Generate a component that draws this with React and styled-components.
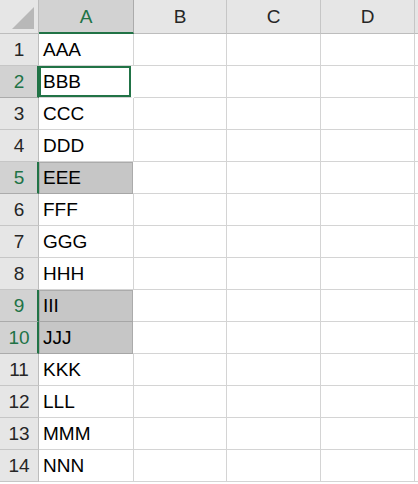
import React from "react"
import styled, { createGlobalStyle, css } from "styled-components"

const GREEN = "#217346"

const GlobalStyle = createGlobalStyle`
  html, body {
    margin: 0;
    padding: 0;
    background: #ffffff;
  }
  body {
    font-family: "Liberation Sans", Arial, sans-serif;
  }
`

const Sheet = styled.div`
  display: grid;
  grid-template-columns: 39px 95px 93px 94px 94px 1fr;
  grid-template-rows: 34px;
  grid-auto-rows: 32px;
  width: 418px;
  height: 484px;
  overflow: hidden;
  background: #ffffff;
`

const Corner = styled.div`
  position: relative;
  box-sizing: border-box;
  background: #e6e6e6;
  border-right: 1px solid #bdbdbd;
  border-bottom: 1px solid #bdbdbd;

  &::after {
    content: "";
    position: absolute;
    right: 4px;
    bottom: 4px;
    width: 0;
    height: 0;
    border-left: 22px solid transparent;
    border-bottom: 22px solid #b8b8b8;
  }
`

const ColHeader = styled.div`
  box-sizing: border-box;
  display: flex;
  align-items: center;
  justify-content: center;
  font-size: 19px;
  color: #262626;
  background: #e6e6e6;
  border-right: 1px solid #c6c6c6;
  border-bottom: 1px solid #bdbdbd;
  ${p =>
    p.$active &&
    css`
      background: #d2d2d2;
      color: ${GREEN};
      border-right-color: #ababab;
      border-bottom: 2px solid ${GREEN};
      padding-top: 1px;
    `}
`

const RowHeader = styled.div`
  box-sizing: border-box;
  display: flex;
  align-items: center;
  justify-content: center;
  font-size: 19px;
  color: #262626;
  background: #e6e6e6;
  border-right: 1px solid #bdbdbd;
  border-bottom: 1px solid #c6c6c6;
  ${p =>
    p.$active &&
    css`
      background: #d2d2d2;
      color: ${GREEN};
      border-right: 2px solid ${GREEN};
      border-bottom-color: #ababab;
      padding-left: 1px;
    `}
`

const Cell = styled.div`
  box-sizing: border-box;
  display: flex;
  align-items: center;
  padding-left: 4px;
  font-size: 19px;
  color: #000000;
  white-space: nowrap;
  border-right: 1px solid #d4d4d4;
  border-bottom: 1px solid #d4d4d4;
  ${p =>
    p.$selected &&
    css`
      background: #c6c6c6;
      border-right-color: #ffffff;
      border-bottom-color: #a6a6a6;
      box-shadow: inset 1px 0 0 #ababab, inset -1px 0 0 #ababab;
    `}
  ${p =>
    p.$rangeTop &&
    css`
      box-shadow: inset 1px 0 0 #ababab, inset -1px 0 0 #ababab,
        inset 0 1px 0 #ababab;
    `}
  ${p =>
    p.$active &&
    css`
      box-shadow: inset 0 0 0 2px ${GREEN};
      margin-right: 2px;
      border-right-color: #ffffff;
    `}
`

const COLS = ["A", "B", "C", "D"]
const VALUES = ["AAA", "BBB", "CCC", "DDD", "EEE", "FFF", "GGG", "HHH", "III", "JJJ", "KKK", "LLL", "MMM", "NNN"]
const SELECTED = [2, 5, 9, 10]

const App = () => (
  <>
    <GlobalStyle />
    <Sheet>
      <Corner />
      {COLS.map(c => (
        <ColHeader key={c} $active={c === "A"}>
          {c}
        </ColHeader>
      ))}
      <ColHeader />
      {VALUES.map((v, i) => {
        const row = i + 1
        const sel = SELECTED.includes(row)
        return (
          <React.Fragment key={row}>
            <RowHeader $active={sel}>{row}</RowHeader>
            <Cell
              $active={row === 2}
              $selected={sel && row !== 2}
              $rangeTop={row === 5 || row === 9}
            >
              {v}
            </Cell>
            <Cell />
            <Cell />
            <Cell />
            <Cell />
          </React.Fragment>
        )
      })}
    </Sheet>
  </>
)

export default App
